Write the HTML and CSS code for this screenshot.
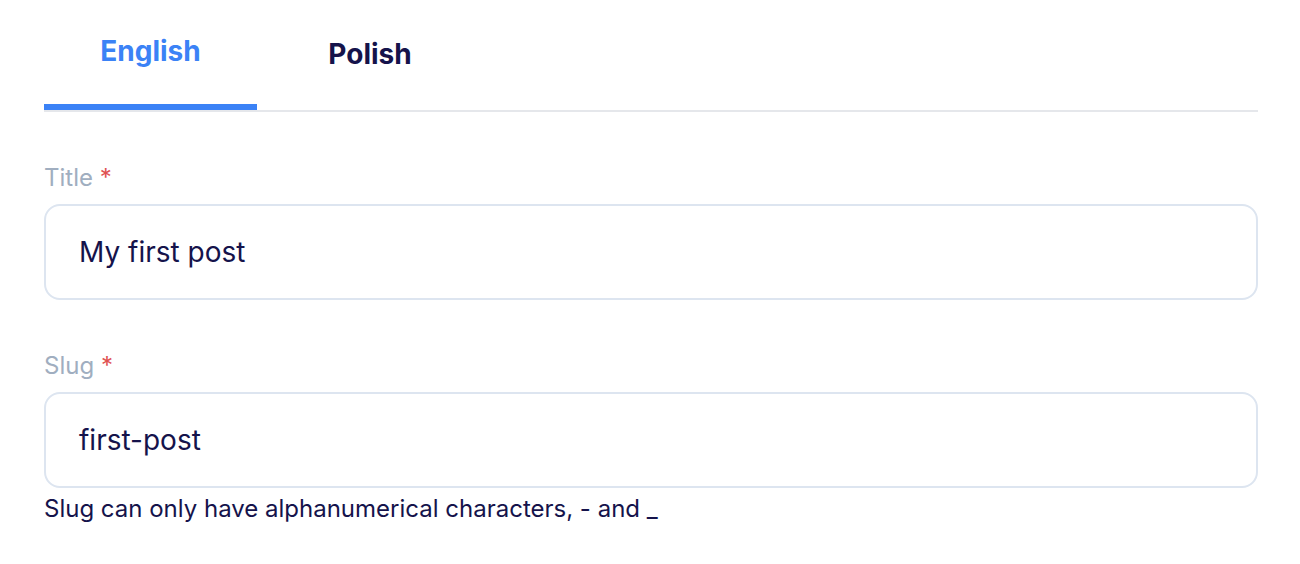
FILE: index.html
```html
<!DOCTYPE html>
<html>
<head>
<meta charset="utf-8">
<link rel="stylesheet" href="styles.css">
</head>
<body>
<div class="page">
  <div class="tabs">
    <div class="tab tab-active">English</div>
    <div class="tab tab-polish">Polish</div>
  </div>
  <div class="field field-first">
    <label class="label">Title <span class="req">*</span></label>
    <div class="input">My first post</div>
  </div>
  <div class="field">
    <label class="label">Slug <span class="req">*</span></label>
    <div class="input">first-post</div>
    <div class="help">Slug can only have alphanumerical characters, - and _</div>
  </div>
</div>
</body>
</html>
```
FILE: styles.css
```css
html, body {
  margin: 0;
  padding: 0;
  background: #ffffff;
}
body {
  font-family: Inter, "Noto Sans", sans-serif;
  color: #15134b;
}
.page {
  width: 1214px;
  margin-left: 44px;
}
.tabs {
  display: flex;
  border-bottom: 2px solid #e5e7eb;
  height: 110px;
}
.tab {
  box-sizing: border-box;
  height: 110px;
  display: flex;
  align-items: center;
  justify-content: center;
  font-size: 28px;
  font-weight: 700;
  color: #15134b;
}
.tab-active {
  width: 213px;
  color: #3b82f6;
  border-bottom: 6px solid #3b82f6;
  padding-bottom: 2px;
}
.tab-polish {
  width: 226px;
  padding-bottom: 2px;
}
.field-first {
  margin-top: 52px;
}
.field {
  display: flex;
  flex-direction: column;
}
.field + .field {
  margin-top: 52px;
}
.label {
  font-size: 24px;
  line-height: 28px;
  color: #a0aec0;
  margin-bottom: 12px;
}
.req {
  color: #e05252;
}
.input {
  box-sizing: border-box;
  height: 96px;
  border: 2px solid #dde5f0;
  border-radius: 16px;
  padding: 0 33px;
  display: flex;
  align-items: center;
  font-size: 28px;
  color: #15134b;
}
.help {
  margin-top: 6px;
  font-size: 24px;
  line-height: 30px;
  color: #15134b;
}
```
